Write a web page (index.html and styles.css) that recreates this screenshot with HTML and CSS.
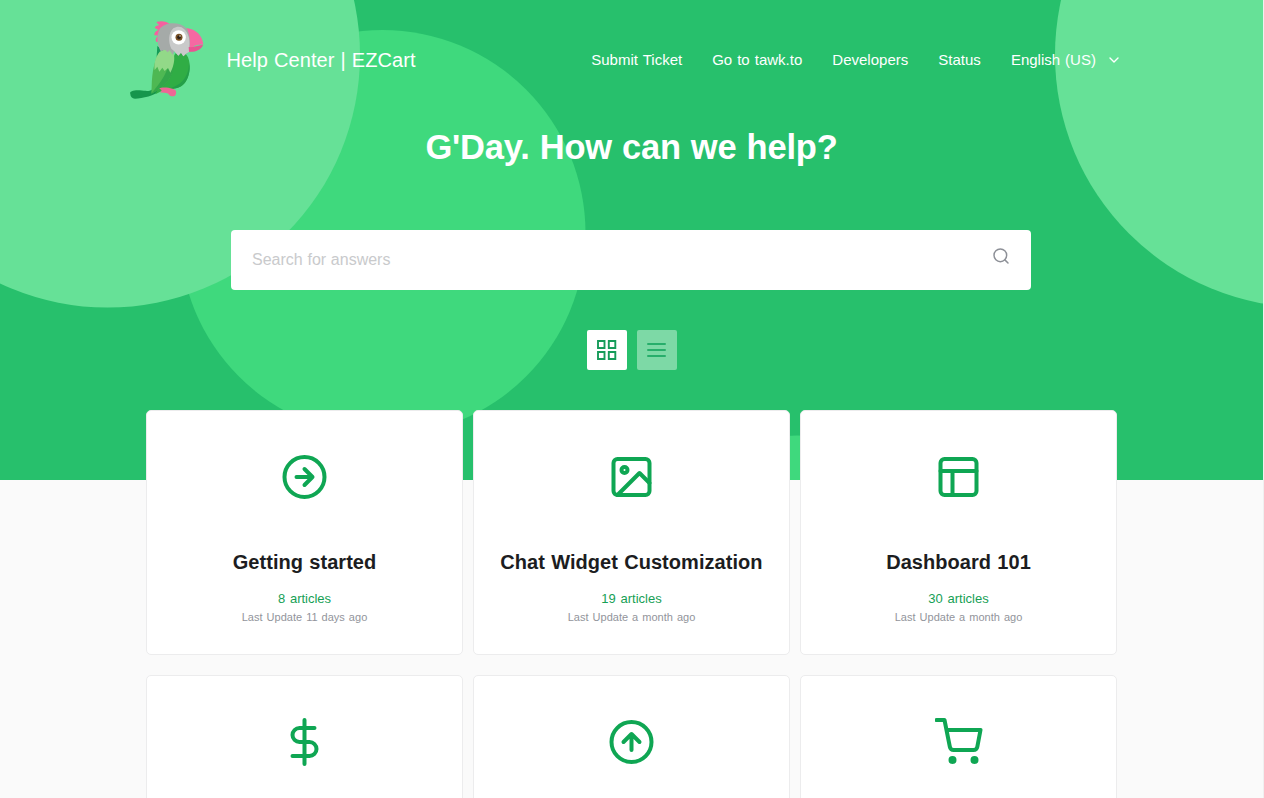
FILE: index.html
```html
<!DOCTYPE html>
<html lang="en">
<head>
<meta charset="utf-8">
<title>Help Center | EZCart</title>
<link rel="stylesheet" href="styles.css">
</head>
<body>
<div class="page">
  <header class="hero">
    <svg class="hero-bg" width="1263" height="480" viewBox="0 0 1263 480" aria-hidden="true">
      <circle cx="382.500" cy="233" r="203" fill="#3fd97d"/>
      <circle cx="797" cy="638" r="202.5" fill="#3fd97d"/>
      <circle cx="107.500" cy="55" r="252.500" fill="#66e197"/>
      <circle cx="1307.500" cy="55" r="252.500" fill="#66e197"/>
    </svg>
    <div class="topbar">
      <a class="brand">
        <svg class="logo" width="100" height="100" viewBox="0 0 300 300" aria-hidden="true">
          <path d="M112 108L134 124 136 142 110 140Z" fill="#159a58"/>
          <path d="M150 43C140 32 120 32 109 36 113 41 115 43 118 46 110 46 105 50 104 54 109 56 113 58 115 60 106 63 102 69 103 76 108 75 112 76 115 77 107 82 105 90 109 96L120 94Z" fill="#f5609f"/>
          <path d="M31 252C27 243 43 240 59 241 80 243 87 244 96 239L122 240C105 258 67 265 45 266 36 266 31 260 31 252Z" fill="#16964c"/>
          <path d="M165 132C176 122 197 125 204 142 213 164 210 196 196 217 184 234 162 240 138 236L106 253Z" fill="#30ad45"/>
          <path d="M207 160C207 191 193 222 151 235 181 239 198 220 205 198 210 183 210 171 207 160Z" fill="#249f49"/>
          <path d="M116 129C104 151 96 185 95 230L94 251C119 240 151 216 157 184 162 168 157 153 151 142Z" fill="#4eb853"/>
          <path d="M94 251C115 225 129 210 143 175L160 171C159 207 125 238 94 251Z" fill="#33a64a"/>
          <path d="M118 236C124 231 143 232 157 236 170 238 171 249 165 257 158 260 149 259 145 251 138 248 128 249 119 247 126 243 127 239 118 236Z" fill="#ee6795"/>
          <path d="M119 125C104 146 102 162 104 180L112 170 118 185 127 173 134 183 144 174 151 188C160 172 166 147 161 132L148 112Z" fill="#92d988"/>
          <path d="M119 57C136 35 180 34 200 56 216 81 210 106 207 126 198 130 195 135 190 139L183 128 175 137 163 124 158 134 149 121 143 127 135 119 122 124C111 102 108 77 119 57Z" fill="#a5aaa8"/>
          <path d="M160 55C179 43 197 54 205 77 211 94 208 111 207 126 197 130 195 134 190 139L183 128 175 137 163 124 154 116C145 98 144 69 160 55Z" fill="#c9caca"/>
          <path d="M199 54C229 58 247 76 250 104 237 103 230 106 222 108 220 121 213 126 207 126 211 109 213 78 199 54Z" fill="#f568a2"/>
          <path d="M206 111C219 113 231 107 249 104 245 120 224 127 207 125Z" fill="#e95392"/>
          <circle cx="176" cy="82" r="21.500" fill="#fff"/>
          <circle cx="177" cy="82" r="10.500" fill="#795126"/>
          <circle cx="177" cy="82" r="5.500" fill="#302016"/>
          <circle cx="180" cy="78" r="2" fill="#fff"/>
        </svg>
        <span class="brand-name">Help Center | EZCart</span>
      </a>
      <nav class="nav">
        <a>Submit Ticket</a>
        <a>Go to tawk.to</a>
        <a>Developers</a>
        <a>Status</a>
        <a class="lang">English (US)
          <svg width="10" height="6" viewBox="0 0 10 6" fill="none" stroke="currentColor" stroke-width="1.4" stroke-linecap="round" stroke-linejoin="round"><path d="M1 1l4 4 4-4"/></svg>
        </a>
      </nav>
    </div>
    <h1 class="title">G'Day. How can we help?</h1>
    <div class="search">
      <span class="placeholder">Search for answers</span>
      <svg class="search-icon" width="16" height="16" viewBox="0 0 24 24" fill="none" stroke="currentColor" stroke-width="2.200" stroke-linecap="round" stroke-linejoin="round"><circle cx="11" cy="11" r="9.500"/><path d="M22.500 22.500l-4.700-4.700"/></svg>
    </div>
    <div class="toggle">
      <button class="view active" aria-label="Grid view">
        <svg width="20" height="20" viewBox="0 0 20 20" fill="none" stroke="currentColor" stroke-width="1.900"><path d="M1 1h6.500v7H1zM11.800 1h6.500v7h-6.500zM1 12h6.500v7H1zM11.800 12h6.500v7h-6.500z"/></svg>
      </button>
      <button class="view" aria-label="List view">
        <svg width="20" height="20" viewBox="0 0 20 20" fill="none" stroke="currentColor" stroke-width="2" stroke-linecap="round"><path d="M1 4h17M1 10h17M1 16h17"/></svg>
      </button>
    </div>
  </header>
  <main class="cards">
    <a class="card">
      <svg class="icon" viewBox="0.25 0 24 24"><circle cx="12" cy="12" r="10"/><path d="M12 16l4-4-4-4M8 12h8"/></svg>
      <h2>Getting started</h2>
      <p class="count">8 articles</p>
      <p class="updated">Last Update 11 days ago</p>
    </a>
    <a class="card">
      <svg class="icon" viewBox="0.25 0 24 24"><rect x="3" y="3" width="18" height="18" rx="2"/><circle cx="8.500" cy="8.500" r="1.500"/><path d="M21 15l-5-5L5 21"/></svg>
      <h2>Chat Widget Customization</h2>
      <p class="count">19 articles</p>
      <p class="updated">Last Update a month ago</p>
    </a>
    <a class="card">
      <svg class="icon" viewBox="0.25 0 24 24"><rect x="3" y="3" width="18" height="18" rx="2"/><path d="M3 9h18M9 21V9"/></svg>
      <h2>Dashboard 101</h2>
      <p class="count">30 articles</p>
      <p class="updated">Last Update a month ago</p>
    </a>
    <a class="card">
      <svg class="icon" viewBox="0.25 0 24 24"><path d="M12 1v22M17 5H9.500a3.500 3.500 0 0 0 0 7h5a3.500 3.500 0 0 1 0 7H6"/></svg>
    </a>
    <a class="card">
      <svg class="icon" viewBox="0.25 0 24 24"><circle cx="12" cy="12" r="10"/><path d="M16 12l-4-4-4 4M12 16V8"/></svg>
    </a>
    <a class="card">
      <svg class="icon" viewBox="0.25 0 24 24"><circle cx="9" cy="21" r="1"/><circle cx="20" cy="21" r="1"/><path d="M1 1h4l2.680 13.390a2 2 0 0 0 2 1.610h9.720a2 2 0 0 0 2-1.610L23 6H6"/></svg>
    </a>
  </main>
</div>
</body>
</html>
```
FILE: styles.css
```css
* { box-sizing: border-box; }
body {
  margin: 0;
  height: 798px;
  overflow: hidden;
  background: #fafafa;
  font-family: "Liberation Sans", Arial, sans-serif;
  color: #1c1d21;
}
.page {
  width: 1264px;
  height: 798px;
  overflow: hidden;
  border-right: 1px solid #f0f0f0;
}
.hero {
  position: relative;
  height: 480px;
  background: #27c06c;
  color: #fff;
}
.hero-bg { position: absolute; inset: 0; z-index: 0; }
.topbar, .title, .search, .toggle { position: relative; z-index: 1; }
.topbar {
  display: flex;
  align-items: center;
  justify-content: space-between;
  height: 120px;
  padding: 0 144px 0 120px;
}
.brand { display: flex; align-items: center; gap: 6.5px; }
.logo { display: block; }
.brand-name { font-size: 20px; letter-spacing: .08px; word-spacing: .4px; }
.nav {
  display: flex;
  gap: 30px;
  margin-bottom: 2px;
  font-size: 15px;
  letter-spacing: .01px;
  word-spacing: .8px;
  white-space: nowrap;
}
.lang { display: flex; align-items: center; gap: 13px; }
.lang svg { margin-top: 1px; }
.title {
  margin: 0;
  padding-top: 7px;
  text-align: center;
  font-size: 34.5px;
  line-height: 40px;
  letter-spacing: -.18px;
  word-spacing: .6px;
}
.search {
  display: flex;
  align-items: center;
  justify-content: space-between;
  width: 800px;
  height: 60px;
  margin: 63px 0 0 231px;
  padding: 0 22px 0 21px;
  background: #fff;
  border-radius: 4px;
}
.placeholder { color: #c9cacc; font-size: 16px; word-spacing: .3px; }
.search-icon { color: #8d9097; margin-bottom: 8px; }
.toggle { display: flex; justify-content: center; gap: 10px; margin-top: 40px; }
.view {
  display: grid;
  place-items: center;
  width: 40px;
  height: 40px;
  padding: 0;
  border: 0;
  border-radius: 2px;
  background: #7dd9a6;
  color: #27ae6b;
}
.view.active { background: #fff; color: #169c5a; }
.cards {
  position: relative;
  z-index: 2;
  display: grid;
  grid-template-columns: repeat(3, 317px);
  gap: 20px 10px;
  margin: -70px 0 0 146px;
}
.card {
  display: flex;
  flex-direction: column;
  align-items: center;
  height: 245px;
  padding-top: 42px;
  background: #fff;
  border: 1px solid #ececed;
  border-radius: 5px;
}
.icon {
  width: 48px;
  height: 48px;
  flex: none;
  fill: none;
  stroke: #0fa653;
  stroke-width: 2;
  stroke-linecap: round;
  stroke-linejoin: round;
}
.card h2 {
  margin: 49px 0 0;
  font-size: 20px;
  line-height: 24px;
  letter-spacing: .05px;
  word-spacing: .6px;
  white-space: nowrap;
}
.card p { margin: 0; }
.card .count { margin-top: 16px; font-size: 13px; line-height: 18px; word-spacing: 1.2px; color: #16a055; }
.card .updated { margin-top: 1px; font-size: 11px; line-height: 16px; letter-spacing: .02px; word-spacing: .9px; color: #92949b; }
```
